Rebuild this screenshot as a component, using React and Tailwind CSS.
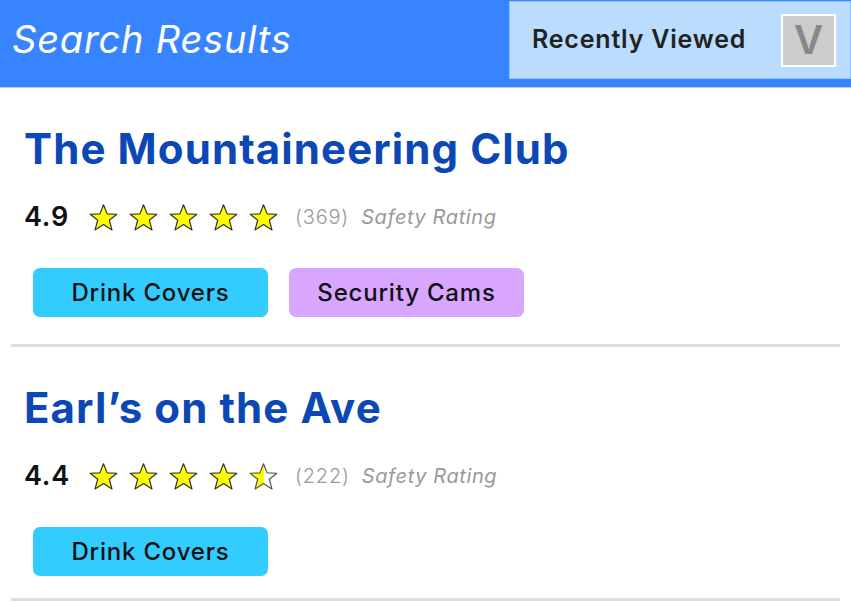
import React from "react";

const font = { fontFamily: "Inter, 'Noto Sans', sans-serif" };

function Star({ fill = 1, id }) {
  const points = "12,1.5 15,9 23,9.3 16.8,14.3 19,22.3 12,17.8 5,22.3 7.2,14.3 1,9.3 9,9";
  return (
    <svg width="29" height="29" viewBox="0 0 24 24">
      <defs>
        <linearGradient id={id} x1="0" x2="1" y1="0" y2="0">
          <stop offset={fill} stopColor="#ffff00" />
          <stop offset={fill} stopColor="#ffffff" />
        </linearGradient>
      </defs>
      <polygon
        points={points}
        fill={`url(#${id})`}
        stroke={fill < 1 ? "#555" : "#333"}
        strokeWidth="1"
        strokeLinejoin="round"
      />
    </svg>
  );
}

function Tag({ label, color }) {
  return (
    <div
      className={`w-[235px] h-[49px] rounded-[7px] flex items-center justify-center text-[24px] font-medium tracking-[0.8px] text-[#111] ${color}`}
    >
      {label}
    </div>
  );
}

function Result({ name, rating, count, stars, tags, index, last }) {
  return (
    <div>
      <div className="px-[24px] pt-[36px]">
        <h2 className="h-[48px] flex items-center text-[42px] font-bold text-[#0b48b6] tracking-[1.1px]">
          {name}
        </h2>
        <div className="mt-[29px] h-[32px] flex items-center">
          <span className="text-[27px] font-semibold text-[#111] tracking-[0.8px] w-[65px]">{rating}</span>
          <div className="flex items-center gap-[11px]">
            {stars.map((s, i) => (
              <Star key={i} fill={s} id={`star-${index}-${i}`} />
            ))}
          </div>
          <span className="ml-[17px] text-[20px] font-light tracking-[0.8px] text-[#999]">({count})</span>
          <span className="ml-[12px] text-[20px] italic tracking-[0.6px] text-[#999]">Safety Rating</span>
        </div>
        <div className="mt-[35px] pl-[9px] flex gap-[21px]">
          {tags.map((t) => (
            <Tag key={t.label} label={t.label} color={t.color} />
          ))}
        </div>
      </div>
      <div className={`${last ? "mt-[22px]" : "mt-[27px]"} mx-[11px] h-[3px] bg-[#dddddd]`} />
    </div>
  );
}

export default function App() {
  return (
    <div className="w-[851px] h-[602px] bg-white overflow-hidden" style={font}>
      <div className="h-[88px] bg-[#3884ff] flex items-start justify-between border-b border-[#a8ccff]">
        <h1 className="h-[78px] flex items-center pl-[12px] text-[38px] italic tracking-[0.8px] text-white">
          Search Results
        </h1>
        <div className="mt-[1px] w-[342px] h-[78px] bg-[#b9dcff] border border-[#8ec1ff] flex items-center justify-between pl-[22px] pr-[14px]">
          <span className="text-[25px] font-semibold tracking-[0.8px] text-[#222]">Recently Viewed</span>
          <div className="w-[55px] h-[53px] bg-[#cccccc] border-2 border-white flex items-center justify-center text-[40px] font-semibold text-[#888]">
            V
          </div>
        </div>
      </div>
      <Result
        index={0}
        name="The Mountaineering Club"
        rating="4.9"
        count="369"
        stars={[1, 1, 1, 1, 1]}
        tags={[
          { label: "Drink Covers", color: "bg-[#33ccff]" },
          { label: "Security Cams", color: "bg-[#d8a6ff]" },
        ]}
      />
      <Result
        index={1}
        last
        name="Earl’s on the Ave"
        rating="4.4"
        count="222"
        stars={[1, 1, 1, 1, 0.5]}
        tags={[{ label: "Drink Covers", color: "bg-[#33ccff]" }]}
      />
    </div>
  );
}
